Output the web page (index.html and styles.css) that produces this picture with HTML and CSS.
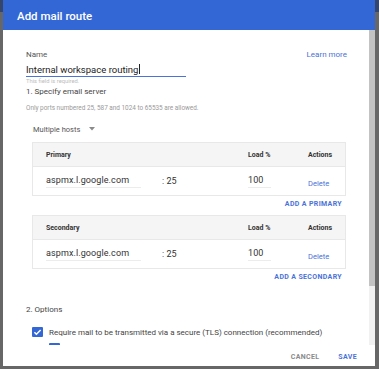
FILE: index.html
```html
<!DOCTYPE html>
<html lang="en">

<head>
    <meta charset="UTF-8">
    <meta name="viewport" content="width=device-width, initial-scale=1.0">
    <title>Add mail route</title>
    <link rel="stylesheet" href="styles.css">
</head>

<body>

    <div class="dialog">
        <div class="dialog-header">
            <h1>Add mail route</h1>
        </div>

        <div class="dialog-main">
            <div class="dialog-content">
                <div class="label-row">
                    <label>Name</label>
                    <a class="link">Learn more</a>
                </div>
                <div class="text-field">Internal workspace routing<span class="caret"></span></div>
                <div class="hint">This field is required.</div>

                <div class="section-title">1. Specify email server</div>
                <div class="note">Only ports numbered 25, 587 and 1024 to 65535 are allowed.</div>

                <div class="select">
                    Multiple hosts
                    <svg class="arrow" width="6" height="4" viewBox="0 0 6 4"><path d="M0 0h6L3 3.5z" fill="#8a8a8a"/></svg>
                </div>

                <!-- Primary hosts -->
                <div class="host-table">
                    <div class="host-row head">
                        <span class="col-host">Primary</span>
                        <span class="col-load">Load %</span>
                        <span class="col-action">Actions</span>
                    </div>
                    <div class="host-row">
                        <span class="col-host"><span class="cell-input host">aspmx.l.google.com</span></span>
                        <span class="col-port">: 25</span>
                        <span class="col-load"><span class="cell-input load">100</span></span>
                        <span class="col-action"><a class="link small">Delete</a></span>
                    </div>
                </div>
                <div class="add-row"><a class="link caps">ADD A PRIMARY</a></div>

                <!-- Secondary hosts -->
                <div class="host-table">
                    <div class="host-row head">
                        <span class="col-host">Secondary</span>
                        <span class="col-load">Load %</span>
                        <span class="col-action">Actions</span>
                    </div>
                    <div class="host-row">
                        <span class="col-host"><span class="cell-input host">aspmx.l.google.com</span></span>
                        <span class="col-port">: 25</span>
                        <span class="col-load"><span class="cell-input load">100</span></span>
                        <span class="col-action"><a class="link small">Delete</a></span>
                    </div>
                </div>
                <div class="add-row"><a class="link caps">ADD A SECONDARY</a></div>

                <div class="section-title options">2. Options</div>

                <div class="option">
                    <span class="checkbox"><svg width="11" height="10" viewBox="0 0 11 10"><path d="M2.4 5.2l2 2 4.2-4.3" fill="none" stroke="#fff" stroke-width="1.5"/></svg></span>
                    Require mail to be transmitted via a secure (TLS) connection (recommended)
                </div>
                <div class="option nested">
                    <span class="checkbox"><svg width="11" height="10" viewBox="0 0 11 10"><path d="M2.4 5.2l2 2 4.2-4.3" fill="none" stroke="#fff" stroke-width="1.5"/></svg></span>
                    Require CA signed certificate (recommended)
                </div>
            </div>
            <div class="scrollbar">
                <div class="thumb"></div>
            </div>
        </div>

        <div class="dialog-footer">
            <a class="button">CANCEL</a>
            <a class="button primary">SAVE</a>
        </div>
    </div>

</body>

</html>
```

FILE: styles.css
```css
* {
    box-sizing: border-box;
    margin: 0;
    padding: 0;
    font-family: Roboto, "Liberation Sans", Arial, sans-serif;
}

body {
    width: 379px;
    height: 369px;
    overflow: hidden;
    background: linear-gradient(#35466a 0, #35466a 12px, #676767 12px);
}

.dialog {
    display: flex;
    flex-direction: column;
    margin-left: 3px;
    width: 372px;
    height: 366px;
    background-color: #fff;
    overflow: hidden;
}

.dialog-header {
    display: flex;
    align-items: center;
    height: 30px;
    padding: 1px 0 0 14px;
    background-color: #3367d6;
}

.dialog-header h1 {
    font-size: 11.5px;
    font-weight: 500;
    color: #fff;
}

.dialog-main {
    display: flex;
    flex: 1;
    min-height: 0;
}

.dialog-content {
    flex: 1;
    overflow: hidden;
    padding: 19px 22px 0 23px;
    color: #444;
}

.scrollbar {
    width: 6px;
    background-color: #f1f1f1;
}

.thumb {
    height: 256px;
    background-color: #c3c3c3;
}

.label-row {
    display: flex;
    justify-content: space-between;
    align-items: center;
    height: 10px;
    font-size: 8px;
    color: #555;
}

.link {
    color: #4a72d8;
    font-size: 8px;
}

.link.small {
    font-size: 7.5px;
}

.link.caps {
    font-size: 7px;
    font-weight: 700;
    letter-spacing: 0.35px;
}

.text-field {
    width: 160px;
    height: 13px;
    margin-top: 5px;
    font-size: 9.5px;
    line-height: 12px;
    color: #222;
    border-bottom: 1px solid #4a72d8;
}

.caret {
    display: inline-block;
    width: 1px;
    height: 10px;
    margin-left: 1px;
    vertical-align: -1px;
    background-color: #222;
}

.hint {
    height: 8px;
    font-size: 5.8px;
    line-height: 8px;
    color: #bdbdbd;
}

.section-title {
    height: 10px;
    margin-top: 2px;
    font-size: 8px;
    line-height: 10px;
    color: #444;
}

.note {
    height: 8px;
    margin-top: 7px;
    font-size: 6.4px;
    line-height: 8px;
    color: #9a9a9a;
}

.select {
    display: flex;
    align-items: center;
    height: 10px;
    margin: 12px 0 0 7px;
    font-size: 7.5px;
    color: #555;
}

.arrow {
    margin-left: 9px;
}

.host-table {
    margin: 8px 1px 0 6px;
    border: 1px solid #e8e8e8;
}

.host-row {
    display: grid;
    grid-template-columns: 116px 86px 60px 1fr;
    align-items: center;
    height: 28px;
    padding-left: 13px;
    font-size: 9px;
    color: #333;
}

.host-row.head {
    height: 24px;
    background-color: #f5f5f5;
    border-bottom: 1px solid #e8e8e8;
    font-size: 7px;
    font-weight: 700;
    color: #333;
}

.head .col-host {
    grid-column: 1 / 3;
}

.col-action {
    padding-top: 3px;
}

.head .col-action {
    padding-top: 0;
}

.cell-input {
    display: inline-block;
    padding-bottom: 1px;
    border-bottom: 1px solid #ececec;
    line-height: 11px;
    letter-spacing: 0.1px;
}

.cell-input.host {
    width: 95px;
}

.cell-input.load {
    width: 23px;
}

.add-row {
    display: flex;
    justify-content: flex-end;
    height: 10px;
    margin: 3px 5px 0 0;
    line-height: 10px;
}

.add-row + .host-table {
    margin-top: 6px;
}

.section-title.options {
    margin-top: 23px;
}

.option {
    display: flex;
    align-items: center;
    gap: 6px;
    height: 12px;
    margin: 11px 0 0 6px;
    font-size: 8px;
    color: #444;
    white-space: nowrap;
}

.option.nested {
    margin: 4px 0 0 23px;
}

.checkbox {
    display: flex;
    width: 11px;
    height: 10px;
    border-radius: 1px;
    background-color: #3367d6;
}

.dialog-footer {
    display: flex;
    justify-content: flex-end;
    align-items: center;
    gap: 19px;
    height: 21px;
    padding: 3px 18px 0 0;
}

.button {
    font-size: 7px;
    font-weight: 700;
    letter-spacing: 0.35px;
    color: #8a8a8a;
}

.button.primary {
    color: #4a72d8;
}
```
